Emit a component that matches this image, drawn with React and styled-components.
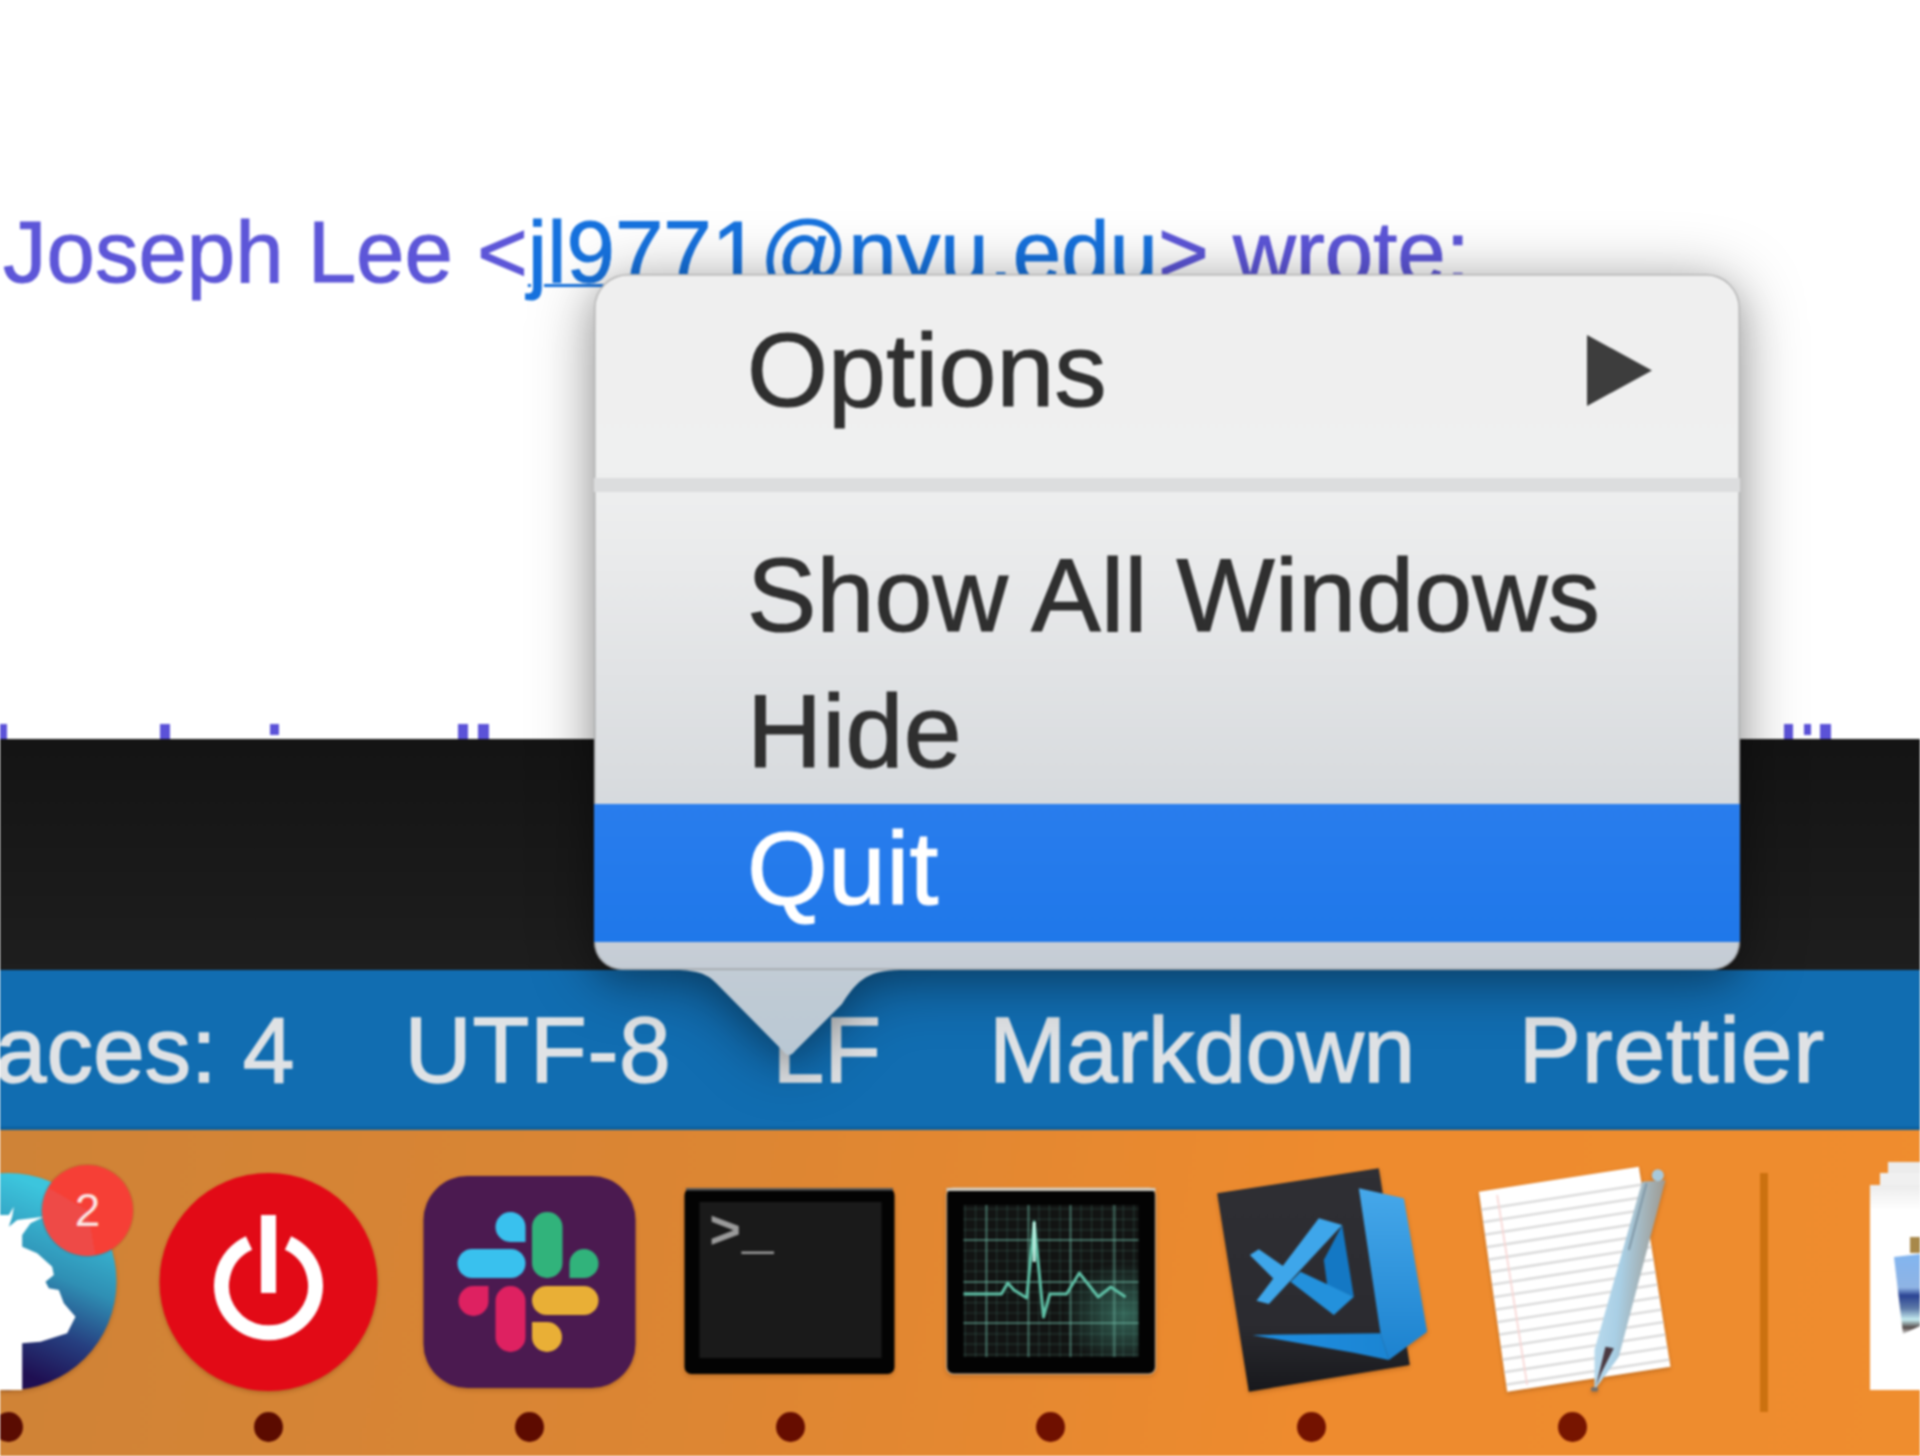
import React from "react";
import styled, { createGlobalStyle } from "styled-components";

const Global = createGlobalStyle`
  html, body { margin: 0; padding: 0; background: #fff; }
  * { box-sizing: border-box; }
`;

const Screen = styled.div`
  position: relative;
  width: 1920px;
  height: 1456px;
  overflow: hidden;
  display: flex;
  flex-direction: column;
  font-family: "Liberation Sans", Arial, sans-serif;
  filter: blur(1px);
`;

/* ---------- mail ---------- */
const MailArea = styled.section`
  height: 739px;
  flex: none;
  background: #fff;
  display: flex;
  flex-direction: column;
  justify-content: space-between;
  overflow: hidden;
`;
const QuoteLine = styled.p`
  margin: 0;
  padding: 202px 0 0 3px;
  font-size: 87px;
  line-height: 100px;
  white-space: nowrap;
  color: #5d56d8;
  -webkit-text-stroke: 1px currentColor;
`;
const MailLink = styled.a`
  color: #1672de;
  text-decoration: underline;
  text-decoration-thickness: 3px;
`;
const TickRow = styled.div`
  display: flex;
  align-items: flex-start;
  height: 15px;
`;
const Tick = styled.span`
  flex: none;
  width: ${(p) => p.$w}px;
  height: ${(p) => (p.$dot ? 11 : 15)}px;
  margin-left: ${(p) => p.$gap}px;
  background: #5b52d8;
`;

/* ---------- editor ---------- */
const EditorGap = styled.section`
  height: 231px;
  flex: none;
  background: linear-gradient(180deg, #141414 0%, #1e1e1e 100%);
`;

const StatusBar = styled.footer`
  height: 160px;
  flex: none;
  background: #116db1;
  box-shadow: inset 0 -3px 2px #0c5f9c;
  display: flex;
  justify-content: flex-end;
  align-items: center;
  padding: 0 95px 1px 0;
  overflow: hidden;
`;
const StatusItem = styled.span`
  flex: none;
  margin-left: ${(p) => p.$gap}px;
  font-size: 93px;
  letter-spacing: ${(p) => p.$track || 0}px;
  line-height: 100px;
  color: #dfe2e5;
  white-space: nowrap;
  -webkit-text-stroke: 1.4px currentColor;
`;

/* ---------- dock ---------- */
const Dock = styled.section`
  flex: 1;
  display: flex;
  align-items: flex-start;
  padding-top: 32px;
  overflow: hidden;
  background: linear-gradient(100deg, #cf8337 0%, #dd8633 38%, #ee8b2e 68%, #ef8d2e 100%);
`;
const DockRow = styled.div`
  display: flex;
  flex: none;
  margin-left: -122.35px;
`;
const DockItem = styled.div`
  position: relative;
  width: 260.7px;
  flex: none;
  display: flex;
  flex-direction: column;
  align-items: center;
`;
const IconSvg = styled.svg`
  display: block;
  width: 261px;
  height: 240px;
  flex: none;
  overflow: visible;
  filter: drop-shadow(0 2px 2px rgba(90, 40, 0, 0.3));
`;
const RunDot = styled.span`
  width: 29px;
  height: 30px;
  margin-top: 10px;
  border-radius: 50%;
  background: ${(p) => p.$color};
`;
const Badge = styled.span`
  position: absolute;
  left: 164.5px;
  top: 3px;
  width: 91px;
  height: 91px;
  border-radius: 50%;
  background: conic-gradient(#f63f36 0 170deg, #ee4a47 170deg 300deg, #f63f36 300deg);
  box-shadow: 0 0 2px rgba(90, 30, 0, 0.6);
  color: #fbe6e4;
  font-size: 46px;
  line-height: 91px;
  text-align: center;
  font-family: "Liberation Sans", Arial, sans-serif;
`;
const DockDivider = styled.div`
  flex: none;
  width: 8px;
  height: 239px;
  margin: 11px 0 0 57.5px;
  background: #cb7110;
`;
const StackSvg = styled.svg`
  display: block;
  flex: none;
  width: 60px;
  height: 240px;
  margin-left: auto;
`;

/* ---------- menu ---------- */
const MenuWrap = styled.div`
  position: absolute;
  left: 594px;
  top: 274px;
  width: 1145.5px;
  height: 696px;
  filter: drop-shadow(0 8px 32px rgba(0, 0, 0, 0.34)) drop-shadow(0 12px 14px rgba(0, 0, 0, 0.16));
`;
const Menu = styled.div`
  position: relative;
  height: 100%;
  border-radius: 34px 34px 28px 28px;
  overflow: hidden;
  display: flex;
  flex-direction: column;
  background: linear-gradient(180deg, #efefef 0%, #eff0f0 28%, #e9eaeb 42%, #d9dcdf 72%, #c4ccd5 100%);
  box-shadow: inset 0 0 0 1.5px rgba(120, 120, 120, 0.5);
`;
const MenuGroup = styled.div`
  flex: none;
  padding: ${(p) => p.$pad};
`;
const Separator = styled.div`
  height: 14px;
  flex: none;
  background: #dcddde;
`;
const MenuItem = styled.div`
  height: ${(p) => (p.$active ? 138 : 136)}px;
  display: flex;
  align-items: center;
  justify-content: space-between;
  padding: 0 88px 10px 153px;
  font-size: 104px;
  letter-spacing: 0.2px;
  line-height: 118px;
  white-space: nowrap;
  color: ${(p) => (p.$active ? "#fff" : "#2f2f2f")};
  background: ${(p) => (p.$active ? "linear-gradient(180deg, #297ded 0%, #1f78ea 100%)" : "transparent")};
  -webkit-text-stroke: 1.2px currentColor;
`;
const SubmenuArrow = styled.svg`
  width: 65px;
  height: 71px;
  display: block;
  flex: none;
`;
const Callout = styled.svg`
  position: absolute;
  left: 66px;
  top: 695px;
  width: 240px;
  height: 92px;
  display: block;
`;

/* ---------- icons ---------- */
const MammothIcon = () => (
  <IconSvg viewBox="0 0 261 240">
    <defs>
      <linearGradient id="globe" gradientUnits="userSpaceOnUse" x1="300" y1="160" x2="90" y2="650">
        <stop offset="0" stopColor="#3cc5dd" />
        <stop offset="0.42" stopColor="#2f8fb4" />
        <stop offset="0.72" stopColor="#263f80" />
        <stop offset="1" stopColor="#1f0f52" />
      </linearGradient>
    </defs>
    <g transform="translate(122.5 -2) scale(0.3333)">
      <circle cx="22" cy="365" r="326" fill="url(#globe)" />
      <path
        fill="#fff"
        d="M-60 165 L25 165 L40 140 L35 170 L25 200 L50 180 L130 170 L90 190 L65 225 L65 260 L110 280 L155 320 L160 345 L135 365 L145 385 L175 390 L190 430 L225 470 L200 520 L120 545 L65 550 L65 690 L-60 690 Z"
      />
    </g>
  </IconSvg>
);

const PowerIcon = () => (
  <IconSvg viewBox="0 0 261 240">
    <circle cx="130.5" cy="120" r="109" fill="#e20a16" />
    <path d="M111 81 A47 47 0 1 0 150 81" fill="none" stroke="#fff" strokeWidth="15" />
    <rect x="123" y="53" width="15" height="78" fill="#fff" />
  </IconSvg>
);

const SlackIcon = () => (
  <IconSvg viewBox="0 0 261 240">
    <rect x="24.5" y="14" width="212" height="212" rx="44" fill="#4b1a50" />
    <rect x="58.5" y="87" width="68" height="29" rx="14.5" fill="#39c1ee" />
    <path d="M126.5 80 H111 A15 15 0 1 1 126.5 65 Z" fill="#39c1ee" />
    <rect x="133" y="50" width="30.5" height="66" rx="15" fill="#31b37b" />
    <path d="M170.5 116 V101 A14.5 14.5 0 1 1 185 116 Z" fill="#31b37b" />
    <path d="M89.5 124 V139 A15 15 0 1 1 74.5 124 Z" fill="#de2161" />
    <rect x="96.5" y="124" width="30" height="66" rx="15" fill="#de2161" />
    <rect x="133" y="124" width="66.5" height="29" rx="14.5" fill="#e9af36" />
    <path d="M133 160 H148 A15 15 0 1 1 133 175 Z" fill="#e9af36" />
  </IconSvg>
);

const TerminalIcon = () => (
  <IconSvg viewBox="0 0 261 240">
    <rect x="24.5" y="26" width="210" height="186" rx="7" fill="#030303" />
    <rect x="26" y="26" width="207" height="2.5" fill="#5a5a5a" />
    <rect x="39.5" y="40" width="182" height="156" fill="#1a1a1a" />
    <text
      x="49"
      y="86"
      fontFamily="'Liberation Mono', monospace"
      fontWeight="700"
      fontSize="54"
      fill="#9a9a9a"
    >
      {">_"}
    </text>
  </IconSvg>
);

const minorX = Array.from({ length: 17 }, (_, i) => 45 + i * 10.55);
const majorX = [66.5, 108.5, 150.5, 194.5];
const minorY = Array.from({ length: 15 }, (_, i) => 47 + i * 10.4);
const majorY = [78, 120, 161];

const ActivityIcon = () => (
  <IconSvg viewBox="0 0 261 240">
    <defs>
      <radialGradient id="glow" cx="0.92" cy="0.72" r="0.35">
        <stop offset="0" stopColor="#4fa58e" stopOpacity="0.55" />
        <stop offset="1" stopColor="#4fa58e" stopOpacity="0" />
      </radialGradient>
    </defs>
    <rect x="26.5" y="26" width="209" height="186" rx="7" fill="#030303" stroke="#e8d9c2" strokeOpacity="0.55" strokeWidth="1.5" />
    <rect x="26.5" y="26" width="209" height="3" fill="#cfcabf" />
    <rect x="43.5" y="43" width="175" height="152" fill="#121413" />
    <rect x="43.5" y="43" width="175" height="152" fill="url(#glow)" />
    <g stroke="#5fa593" strokeOpacity="0.22" strokeWidth="1.2">
      {minorX.map((x) => (
        <line key={x} x1={x} x2={x} y1="43" y2="195" />
      ))}
      {minorY.map((y) => (
        <line key={y} y1={y} y2={y} x1="43.5" x2="218.5" />
      ))}
    </g>
    <g stroke="#6cb3a0" strokeOpacity="0.5" strokeWidth="2">
      {majorX.map((x) => (
        <line key={x} x1={x} x2={x} y1="43" y2="195" />
      ))}
      {majorY.map((y) => (
        <line key={y} y1={y} y2={y} x1="43.5" x2="218.5" />
      ))}
    </g>
    <polyline
      fill="none"
      stroke="#5fc0a6"
      strokeWidth="3"
      strokeLinejoin="round"
      points="43.5,132 81.4,132 87.7,121 94,128 106.7,136 114.2,60 123.5,155 129.8,132 146.6,132 159.3,111 178.2,135 190.8,125 205.6,135"
    />
    <line x1="114.2" x2="114.2" y1="60" y2="100" stroke="#bff0e2" strokeWidth="3" />
  </IconSvg>
);

const VSCodeIcon = () => (
  <IconSvg viewBox="0 0 261 240">
    <defs>
      <linearGradient id="book" x1="0" y1="0" x2="0" y2="1">
        <stop offset="0" stopColor="#2f2f34" />
        <stop offset="0.7" stopColor="#2b2b30" />
        <stop offset="1" stopColor="#17181c" />
      </linearGradient>
      <linearGradient id="panel" x1="0" y1="0" x2="0" y2="1">
        <stop offset="0" stopColor="#46a8ea" />
        <stop offset="1" stopColor="#1c82cf" />
      </linearGradient>
      <linearGradient id="band" x1="1" y1="0" x2="0" y2="0">
        <stop offset="0" stopColor="#1b85d3" />
        <stop offset="1" stopColor="#1f8fe2" />
      </linearGradient>
    </defs>
    <g transform="translate(19.5 -2) scale(0.3333)">
      <polygon points="50,100 535,25 628,615 145,695" fill="url(#book)" />
      <polygon points="155,525 540,520 565,600 460,578" fill="url(#band)" />
      <polygon points="475,85 610,115 680,515 565,600 540,520" fill="url(#panel)" />
      <polygon points="425,195 460,410 380,375 370,300" fill="#1478c4" />
      <polygon points="270,365 300,335 460,410 400,465" fill="#2391dc" />
      <polygon points="148,285 175,268 265,330 225,362" fill="#3ea6ea" />
      <polygon points="355,175 425,195 205,432 168,422" fill="#3ea6ea" />
    </g>
  </IconSvg>
);

const lerp = (a, b, t) => a + (b - a) * t;
const paperLines = Array.from({ length: 15 }, (_, i) => {
  const t = 0.09 + i * 0.0625;
  return {
    x1: lerp(25, 110, t),
    y1: lerp(95, 695, t),
    x2: lerp(505, 600, t),
    y2: lerp(20, 620, t),
  };
});

const TextEditIcon = () => (
  <IconSvg viewBox="0 0 261 240">
    <defs>
      <linearGradient id="pen" x1="0" y1="0" x2="1" y2="0.25">
        <stop offset="0" stopColor="#c3e1f2" />
        <stop offset="0.45" stopColor="#a9cfe5" />
        <stop offset="1" stopColor="#9d9488" />
      </linearGradient>
    </defs>
    <g transform="translate(28.5 -2) scale(0.3333)">
      <polygon points="25,95 505,20 600,620 110,695" fill="#fff" />
      <g stroke="#d9d9d9" strokeWidth="7">
        {paperLines.map((l) => (
          <line key={l.y1} x1={l.x1} y1={l.y1} x2={l.x2} y2={l.y2} />
        ))}
      </g>
      <line x1="80" y1="105" x2="170" y2="675" stroke="#f9d6d4" strokeWidth="5" />
      <polygon points="515,65 585,60 445,590 372,690 372,570" fill="url(#pen)" />
      <circle cx="562" cy="46" r="18" fill="#a9c9da" />
      <polygon points="405,560 430,565 392,640 376,680" fill="#4b3a42" />
      <rect x="362" y="682" width="20" height="12" fill="#6e6e6e" />
      <line x1="528" y1="70" x2="475" y2="270" stroke="#7f97a6" strokeWidth="6" />
    </g>
  </IconSvg>
);

const PhotoStack = () => (
  <StackSvg viewBox="0 0 60 240">
    <defs>
      <linearGradient id="photo" x1="0" y1="0" x2="0" y2="1">
        <stop offset="0" stopColor="#82b5f0" />
        <stop offset="0.42" stopColor="#8fb4e4" />
        <stop offset="0.52" stopColor="#2b4393" />
        <stop offset="0.68" stopColor="#5e7aa8" />
        <stop offset="0.82" stopColor="#c6ecf0" />
        <stop offset="0.92" stopColor="#544a48" />
        <stop offset="1" stopColor="#ddd" />
      </linearGradient>
      <linearGradient id="sheet" x1="0" y1="0" x2="0" y2="1">
        <stop offset="0" stopColor="#ececec" />
        <stop offset="0.12" stopColor="#fff" />
      </linearGradient>
    </defs>
    <rect x="28" y="0" width="32" height="40" fill="#ececec" />
    <rect x="20" y="11" width="40" height="40" fill="#f0f0f0" />
    <rect x="10" y="23" width="50" height="205" fill="url(#sheet)" />
    <rect x="50" y="75" width="10" height="16" fill="#a8884a" />
    <polygon points="34,95 60,92 60,164 43,172" fill="url(#photo)" />
  </StackSvg>
);

const ticks = [
  { gap: 0, w: 7 },
  { gap: 153, w: 10 },
  { gap: 100, w: 9, dot: true },
  { gap: 179, w: 10 },
  { gap: 10, w: 11 },
  { gap: 1295, w: 9 },
  { gap: 11, w: 7, dot: true },
  { gap: 9, w: 11 },
];

const statusItems = [
  { label: "Spaces: 4", gap: 0 },
  { label: "UTF-8", gap: 110, track: 0.7 },
  { label: "LF", gap: 101 },
  { label: "Markdown", gap: 108, track: -0.4 },
  { label: "Prettier", gap: 104, track: 0.8 },
];

const dockApps = [
  { key: "mammoth", Icon: MammothIcon, dot: "#5a0c02", badge: "2" },
  { key: "power", Icon: PowerIcon, dot: "#5b0b00" },
  { key: "slack", Icon: SlackIcon, dot: "#5d0b00" },
  { key: "terminal", Icon: TerminalIcon, dot: "#660d00" },
  { key: "activity", Icon: ActivityIcon, dot: "#6f1000" },
  { key: "vscode", Icon: VSCodeIcon, dot: "#731200" },
  { key: "textedit", Icon: TextEditIcon, dot: "#771500" },
];

export default function App() {
  return (
    <Screen>
      <Global />
      <MailArea>
        <QuoteLine>
          Joseph Lee &lt;<MailLink>jl9771@nyu.edu</MailLink>&gt; wrote:
        </QuoteLine>
        <TickRow>
          {ticks.map((t, i) => (
            <Tick key={i} $gap={t.gap} $w={t.w} $dot={t.dot} />
          ))}
        </TickRow>
      </MailArea>
      <EditorGap />
      <StatusBar>
        {statusItems.map((s) => (
          <StatusItem key={s.label} $gap={s.gap} $track={s.track}>
            {s.label}
          </StatusItem>
        ))}
      </StatusBar>
      <Dock>
        <DockRow>
          {dockApps.map(({ key, Icon, dot, badge }) => (
            <DockItem key={key}>
              <Icon />
              {badge && <Badge>{badge}</Badge>}
              <RunDot $color={dot} />
            </DockItem>
          ))}
        </DockRow>
        <DockDivider />
        <PhotoStack />
      </Dock>
      <MenuWrap>
        <Callout viewBox="0 0 240 92">
          <defs>
            <linearGradient id="callout" x1="0" y1="0" x2="0" y2="1">
              <stop offset="0" stopColor="#c2ccd5" />
              <stop offset="1" stopColor="#b9c8d4" />
            </linearGradient>
          </defs>
          <path
            d="M0 0 H240 V1 C205 1 195 15 182 35 L135 82 Q129 90 123 82 L56 14 C45 2 30 1 8 1 Z"
            fill="url(#callout)"
          />
        </Callout>
        <Menu>
          <MenuGroup $pad="33px 0 35px">
            <MenuItem>
              Options
              <SubmenuArrow viewBox="0 0 65 71">
                <polygon points="0,0 65,35.5 0,71" fill="#3d3d3d" />
              </SubmenuArrow>
            </MenuItem>
          </MenuGroup>
          <Separator />
          <MenuGroup $pad="40px 0 28px">
            <MenuItem>Show All Windows</MenuItem>
            <MenuItem>Hide</MenuItem>
            <MenuItem $active>Quit</MenuItem>
          </MenuGroup>
        </Menu>
      </MenuWrap>
    </Screen>
  );
}
